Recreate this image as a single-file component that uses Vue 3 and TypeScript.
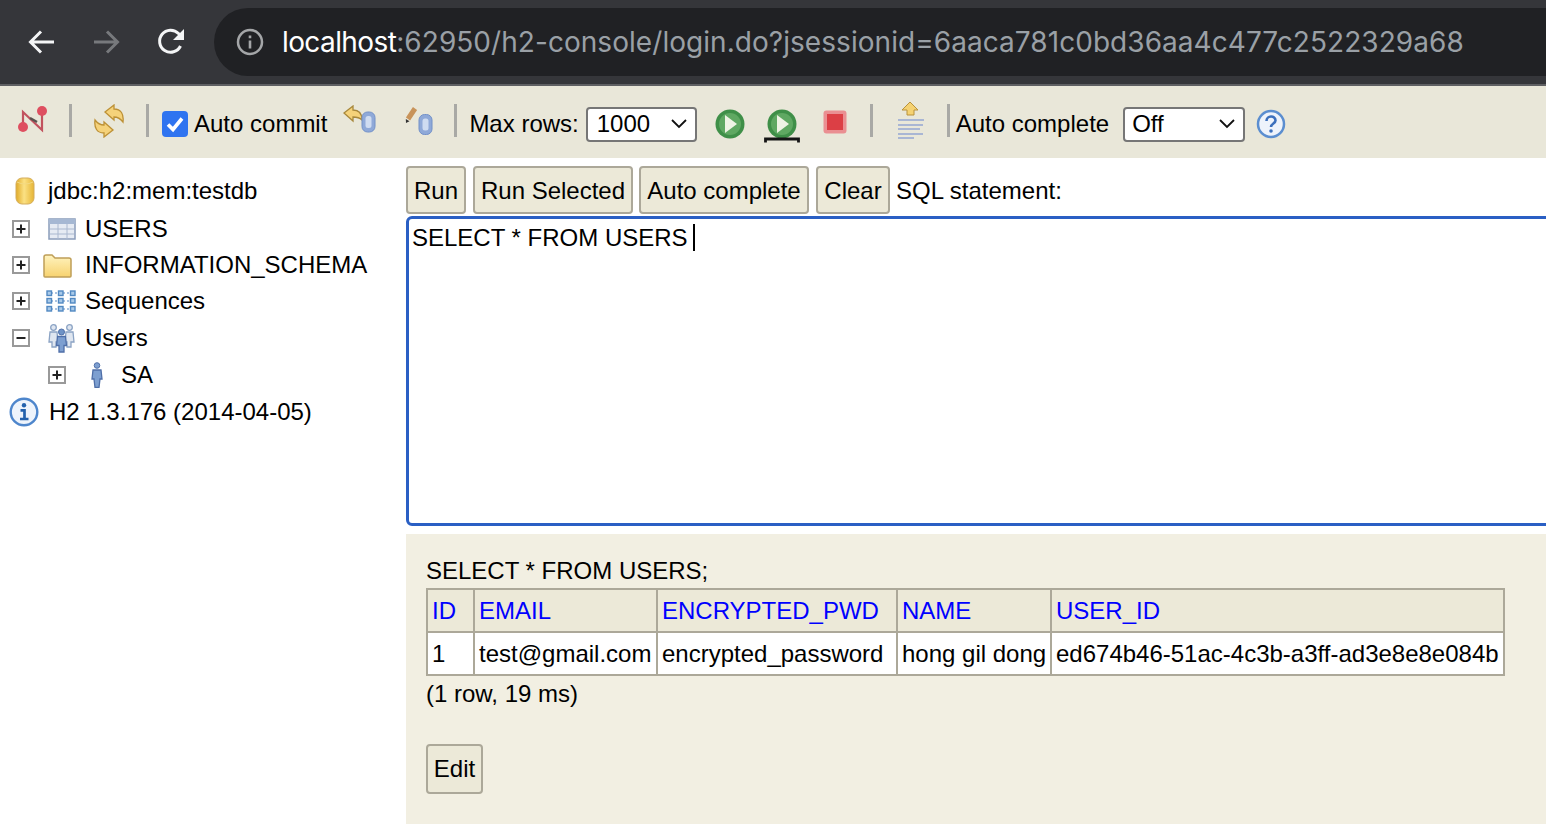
<script setup lang="ts">
const headers: string[] = ['ID', 'EMAIL', 'ENCRYPTED_PWD', 'NAME', 'USER_ID']
const cells: string[] = ['1', 'test@gmail.com', 'encrypted_password', 'hong gil dong', 'ed674b46-51ac-4c3b-a3ff-ad3e8e8e084b']
</script>

<template>
  <div class="page">
    <header class="chrome">
      <svg class="nav first" width="30" height="30" viewBox="0 0 30 30"><path d="M27 15H4M14 4.500 3.500 15 14 25.500" fill="none" stroke="#f4f5f6" stroke-width="3"/></svg>
      <svg class="nav second" width="30" height="30" viewBox="0 0 30 30"><path d="M3 15h23M16 4.500 26.500 15 16 25.500" fill="none" stroke="#77797c" stroke-width="3"/></svg>
      <svg class="nav third" width="30" height="30" viewBox="0 0 30 30"><path d="M24.500 19A11 11 0 1 1 22.500 6.500L26 10" fill="none" stroke="#f4f5f6" stroke-width="3"/><path d="M28 2v11H17z" fill="#f4f5f6"/></svg>
      <div class="omnibox">
        <svg width="28" height="28" viewBox="0 0 28 28"><circle cx="14" cy="14" r="12" fill="none" stroke="#a4a6a8" stroke-width="2.500"/><path d="M14 12.500v8M14 7.500v2.800" stroke="#a4a6a8" stroke-width="2.600"/></svg>
        <span class="url"><b>localhost</b>:62950/h2-console/login.do?jsessionid=6aaca781c0bd36aa4c477c2522329a68</span>
      </div>
    </header>

    <nav class="toolbar">
      <svg class="icon t-disc" width="30" height="28" viewBox="0 0 30 28"><path d="M5 22V7l19 18V7" fill="none" stroke="#c2525e" stroke-width="2.200"/><path d="M12 13l7 4" stroke="#5a5450" stroke-width="2.400"/><circle cx="5" cy="22" r="5" fill="#de4f60"/><circle cx="24" cy="6" r="5" fill="#de4f60"/></svg>
      <i class="sep s1"></i>
      <svg class="icon t-refresh" width="30" height="34" viewBox="0 0 30 34"><g fill="#f5d27a" stroke="#bd9136" stroke-width="1.300"><path d="M11 8 20 1v4C27 5 30 10 29 18 26 14 24 13 20 13v3z"/><path d="M11 8 20 1v4C27 5 30 10 29 18 26 14 24 13 20 13v3z" transform="rotate(180 15 17)"/></g></svg>
      <i class="sep s2"></i>
      <span class="check">
        <svg width="26" height="26" viewBox="0 0 26 26"><rect width="26" height="26" rx="4" fill="#2f74f0"/><path d="M6 13.500l5 5 9-11" fill="none" stroke="#fff" stroke-width="3.600"/></svg>
      </span>
      <span class="label auto-commit">Auto commit</span>
      <svg class="icon t-rollback" width="33" height="28" viewBox="0 0 33 28"><path d="M1 8 10 1v4c5 0 9 3 9 10-2-2-5-3-9-3v4z" fill="#f5d27a" stroke="#a8883c" stroke-width="1.300"/><rect x="19" y="7" width="13" height="20" rx="5.500" fill="#8fa9d8" stroke="#7391c8"/><rect x="22.500" y="11" width="6" height="12" rx="2.500" fill="#cfdcf1"/></svg>
      <svg class="icon t-commit" width="28" height="30" viewBox="0 0 28 30"><path d="M3 14 10 3.500" stroke="#c8935a" stroke-width="5"/><path d="M1 18 .8 14l3.700 2.300z" fill="#333"/><rect x="14" y="9.500" width="13" height="20" rx="5.500" fill="#8fa9d8" stroke="#7391c8"/><rect x="17.500" y="13.500" width="6" height="12" rx="2.500" fill="#cfdcf1"/></svg>
      <i class="sep s3"></i>
      <span class="label max-rows">Max rows:</span>
      <div class="select rows"><span>1000</span><svg width="16" height="10" viewBox="0 0 16 10"><path d="M1 1l7 7 7-7" fill="none" stroke="#111" stroke-width="1.800"/></svg></div>
      <svg class="icon t-play" width="30" height="30" viewBox="0 0 30 30"><circle cx="15" cy="15" r="14.500" fill="#3f8f48"/><circle cx="15" cy="15" r="11" fill="#5fa862"/><path d="M10 6l12 9-12 9z" fill="#eef3e4"/></svg>
      <svg class="icon t-play-sel" width="36" height="34" viewBox="0 0 36 34"><circle cx="18" cy="15" r="14.500" fill="#3f8f48"/><circle cx="18" cy="15" r="11" fill="#5fa862"/><path d="M13 6l12 9-12 9z" fill="#eef3e4"/><path d="M1.500 33.500v-3.500h33v3.500" fill="none" stroke="#151515" stroke-width="2.800"/></svg>
      <svg class="icon t-stop" width="24" height="24" viewBox="0 0 24 24"><rect x=".5" y=".5" width="23" height="23" rx="3" fill="#ea8f92"/><rect x="4" y="4" width="16" height="16" fill="#dc3f45"/></svg>
      <i class="sep s4"></i>
      <svg class="icon t-history" width="28" height="38" viewBox="0 0 28 38"><path d="M13 1l8 8h-4v5h-7V9H5z" fill="#f5d272" stroke="#b8923c"/><path d="M1 19h26M1 24h25M1 28h22M1 33h25M1 37h16" stroke="#a9b6d4" stroke-width="2.200"/></svg>
      <i class="sep s5"></i>
      <span class="label auto-complete">Auto complete</span>
      <div class="select off"><span>Off</span><svg width="16" height="10" viewBox="0 0 16 10"><path d="M1 1l7 7 7-7" fill="none" stroke="#111" stroke-width="1.800"/></svg></div>
      <svg class="icon t-help" width="30" height="30" viewBox="0 0 30 30"><circle cx="15" cy="15" r="13" fill="#eef3fb" stroke="#5b8ed0" stroke-width="2.500"/><path d="M10.500 12c0-6 9-6 9-.5 0 3-4.500 3-4.500 6.500" fill="none" stroke="#3c70bd" stroke-width="2.600"/><circle cx="15" cy="22" r="1.800" fill="#3c70bd"/></svg>
    </nav>

    <div class="workspace">
      <aside class="tree">
        <div class="row root">
          <span class="slot-db"><svg class="icon" width="20" height="28" viewBox="0 0 20 28"><defs><linearGradient id="dbg" x1="0" x2="1" y1="0" y2="0"><stop offset="0" stop-color="#e0aa28"/><stop offset=".45" stop-color="#fbe184"/><stop offset="1" stop-color="#e6b535"/></linearGradient></defs><rect x="1" y="1" width="18" height="26" rx="6" fill="url(#dbg)" stroke="#d4ad5c"/><path d="M2 5q8 4 16 0" fill="none" stroke="#f3d982"/></svg></span>
          <span>jdbc:h2:mem:testdb</span>
        </div>
        <div class="row">
          <svg class="box" width="18" height="18" viewBox="0 0 18 18"><rect x="1" y="1" width="16" height="16" fill="#fff" stroke="#999" stroke-width="2"/><path d="M4.500 9h9M9 4.500v9" stroke="#222" stroke-width="2"/></svg>
          <span class="slot"><svg class="icon table" width="28" height="22" viewBox="0 0 28 22"><rect x="1" y="1" width="26" height="20" fill="#e6ebf3" stroke="#8b9dbb" stroke-width="1.500"/><rect x="1" y="1" width="26" height="5" fill="#a6b8d3"/><path d="M2 11h24M2 16h24M10 6v15M19 6v15" stroke="#aab8cf"/></svg></span>
          <span>USERS</span>
        </div>
        <div class="row">
          <svg class="box" width="18" height="18" viewBox="0 0 18 18"><rect x="1" y="1" width="16" height="16" fill="#fff" stroke="#999" stroke-width="2"/><path d="M4.500 9h9M9 4.500v9" stroke="#222" stroke-width="2"/></svg>
          <span class="slot"><svg class="icon folder" width="29" height="25" viewBox="0 0 29 25"><defs><linearGradient id="fld" x1="0" x2="0" y1="0" y2="1"><stop offset="0" stop-color="#fff3bf"/><stop offset="1" stop-color="#f7d26f"/></linearGradient></defs><path d="M1 23V4q0-2 2-2h6l3 3h14q2 0 2 2v16q0 1-1 1H2q-1 0-1-1z" fill="url(#fld)" stroke="#bf9f58" stroke-width="1.500"/></svg></span>
          <span>INFORMATION_SCHEMA</span>
        </div>
        <div class="row">
          <svg class="box" width="18" height="18" viewBox="0 0 18 18"><rect x="1" y="1" width="16" height="16" fill="#fff" stroke="#999" stroke-width="2"/><path d="M4.500 9h9M9 4.500v9" stroke="#222" stroke-width="2"/></svg>
          <span class="slot"><svg class="icon seq" width="30" height="22" viewBox="0 0 30 22"><path d="M5 3h20M5 11h20M5 19h20" stroke="#8eb0d8" stroke-width="1.500" stroke-dasharray="2 2"/><g fill="#a9cae9" stroke="#5289c2" stroke-width="1.400"><rect x="1" y="1" width="4.500" height="4.500"/><rect x="12.500" y="1" width="4.500" height="4.500"/><rect x="24.500" y="1" width="4.500" height="4.500"/><rect x="1" y="8.500" width="4.500" height="4.500"/><rect x="12.500" y="8.500" width="4.500" height="4.500"/><rect x="24.500" y="8.500" width="4.500" height="4.500"/><rect x="1" y="16.500" width="4.500" height="4.500"/><rect x="12.500" y="16.500" width="4.500" height="4.500"/><rect x="24.500" y="16.500" width="4.500" height="4.500"/></g></svg></span>
          <span>Sequences</span>
        </div>
        <div class="row">
          <svg class="box" width="18" height="18" viewBox="0 0 18 18"><rect x="1" y="1" width="16" height="16" fill="#fff" stroke="#999" stroke-width="2"/><path d="M4.500 9h9" stroke="#222" stroke-width="2"/></svg>
          <span class="slot"><svg class="icon users" width="27" height="29" viewBox="0 0 27 29"><g fill="#dfe6f0" stroke="#8ba3c4" stroke-width="1.300"><circle cx="5.500" cy="3.500" r="2.800"/><circle cx="21.500" cy="3.500" r="2.800"/><path d="M2 8h7l1 10H8v5H4v-5H1zM25 8h-7l-1 10h2v5h4v-5h3z"/></g><circle cx="13.500" cy="8" r="3" fill="#6f93c6" stroke="#4f6fa8"/><path d="M9.500 12.500h8l1 9h-2.500V28h-5v-6.500H8.500z" fill="#7d9fd0" stroke="#4f6fa8" stroke-width="1.300"/></svg></span>
          <span>Users</span>
        </div>
        <div class="row child">
          <svg class="box" width="18" height="18" viewBox="0 0 18 18"><rect x="1" y="1" width="16" height="16" fill="#fff" stroke="#999" stroke-width="2"/><path d="M4.500 9h9M9 4.500v9" stroke="#222" stroke-width="2"/></svg>
          <span class="slot"><svg class="icon person" width="12" height="26" viewBox="0 0 12 26"><circle cx="6" cy="3.500" r="2.800" fill="#7d9fd0" stroke="#4f6fa8"/><path d="M2 8h8l1 9H9l-1 8.500H4L3 17H1z" fill="#7d9fd0" stroke="#4f6fa8" stroke-width="1.300"/></svg></span>
          <span>SA</span>
        </div>
        <div class="row version">
          <svg class="icon ic-info" width="30" height="30" viewBox="0 0 30 30"><circle cx="15" cy="15" r="13.300" fill="#eef4fc" stroke="#4e86cc" stroke-width="2.400"/><path d="M11.500 13.300h4v8M11 22h8.500" fill="none" stroke="#2462ad" stroke-width="2.700"/><circle cx="15" cy="8.300" r="2.200" fill="#2462ad"/></svg>
          <span>H2 1.3.176 (2014-04-05)</span>
        </div>
      </aside>

      <main class="main">
        <div class="actions">
          <button class="btn run">Run</button>
          <button class="btn sel">Run Selected</button>
          <button class="btn auto">Auto complete</button>
          <button class="btn clear">Clear</button>
          <span class="sql-label">SQL statement:</span>
        </div>
        <div class="editor"><span>SELECT * FROM USERS</span><i class="caret"></i></div>
        <section class="result">
          <p class="query">SELECT * FROM USERS;</p>
          <table>
            <colgroup><col class="c1"><col class="c2"><col class="c3"><col class="c4"><col class="c5"></colgroup>
            <thead><tr><th v-for="h in headers" :key="h">{{ h }}</th></tr></thead>
            <tbody><tr><td v-for="c in cells" :key="c">{{ c }}</td></tr></tbody>
          </table>
          <p class="status">(1 row, 19 ms)</p>
          <button class="btn edit">Edit</button>
        </section>
      </main>
    </div>
  </div>
</template>

<style>
html, body { margin: 0; overflow: hidden; background: #fff; }
</style>

<style scoped>
.page { width: 1546px; height: 824px; overflow: hidden; font-family: "Liberation Sans", Arial, sans-serif; font-size: 24px; color: #000; }
.icon { filter: blur(.4px); }
.chrome { height: 84px; box-sizing: border-box; background: #35363a; display: flex; align-items: center; padding-left: 27px; }
.chrome svg.nav { flex: none; }
.nav.second { margin-left: 34px; }
.nav.third { margin-left: 35px; }
.omnibox { margin-left: 28px; flex: 1; min-width: 0; height: 68px; background: #202124; border-radius: 34px 0 0 34px; display: flex; align-items: center; padding-left: 22px; }
.url { margin-left: 18px; font-family: Inter, "Liberation Sans", sans-serif; font-size: 28px; letter-spacing: .05px; color: #9aa0a6; white-space: nowrap; }
.url b { font-weight: 400; color: #fff; letter-spacing: -.6px; }
.toolbar { height: 74px; box-sizing: border-box; border-top: 2px solid #5f6063; background: #e9e7d9; display: flex; align-items: center; padding: 4px 0 0 18px; white-space: nowrap; }
.toolbar > * { flex: none; }
.sep { width: 3px; height: 33px; background: #a9a9a5; display: block; margin-top: -7px; }
.t-disc { margin-top: -10px; }
.s1 { margin-left: 21px; }
.t-refresh { margin-left: 22px; margin-top: -6px; }
.s2 { margin-left: 22px; }
.check { margin-left: 13px; height: 26px; }
.check svg { display: block; }
.auto-commit { margin-left: 6px; }
.t-rollback { margin-left: 16px; margin-top: -10px; }
.t-commit { margin-left: 29px; margin-top: -9px; }
.s3 { margin-left: 21px; }
.max-rows { margin-left: 12px; }
.select { box-sizing: border-box; height: 35px; background: #fff; border: 2px solid #767676; border-radius: 4px; display: flex; align-items: center; justify-content: space-between; padding: 0 8px; }
.rows { width: 111px; margin-left: 7px; padding-left: 9px; }
.off { width: 122px; margin-left: 14px; padding-left: 7px; }
.t-play { margin-left: 18px; }
.t-play-sel { margin-left: 19px; margin-top: 3px; }
.t-stop { margin-left: 23px; margin-top: -5px; }
.s4 { margin-left: 23px; }
.t-history { margin-left: 24px; margin-top: -8px; }
.s5 { margin-left: 22px; }
.auto-complete { margin-left: 6px; }
.t-help { margin-left: 11px; }
.workspace { display: flex; height: 666px; }
.tree { width: 406px; flex: none; box-sizing: border-box; padding-top: 15px; }
.row { height: 36px; display: flex; align-items: center; padding-left: 12px; white-space: nowrap; margin-top: 1px; }
.row:nth-child(1) { margin-top: 0; }
.row:nth-child(2) { margin-top: 2px; }
.row:nth-child(3), .row:nth-child(4) { margin-top: 0; }
.row svg { flex: none; display: block; }
.slot { width: 55px; flex: none; display: flex; justify-content: flex-start; }
.table { margin-left: 18px; }
.folder { margin-left: 13px; }
.seq { margin-left: 16px; }
.users { margin-left: 18px; }
.person { margin-left: 25px; }
.row.root { padding-left: 15px; }
.slot-db { width: 33px; flex: none; }
.child { padding-left: 48px; }
.version { padding-left: 9px; }
.ic-info { margin-right: 10px; }
.main { flex: 1; min-width: 0; }
.actions { display: flex; align-items: flex-start; height: 58px; box-sizing: border-box; padding-top: 8px; white-space: nowrap; }
.btn { font: inherit; color: #000; background: #ece9d8; border: 2px solid #aca899; border-radius: 4px; height: 48px; padding: 2px 0 0; box-sizing: border-box; }
.run { width: 60px; }
.sel { width: 160px; margin-left: 7px; }
.auto { width: 170px; margin-left: 6px; }
.clear { width: 74px; margin-left: 7px; }
.sql-label { margin-left: 6px; align-self: center; }
.editor { box-sizing: border-box; width: 1160px; height: 310px; border: 3px solid #2a5fc4; border-radius: 6px; padding: 2px 3px; display: flex; align-items: flex-start; line-height: 34px; }
.caret { width: 2px; height: 27px; background: #000; margin: 3px 0 0 5px; display: block; }
.result { margin-top: 8px; height: 290px; box-sizing: border-box; background: #f2efe2; padding: 19px 20px 0; }
.query { margin: 0; line-height: 35px; }
table { border-collapse: collapse; table-layout: fixed; width: 1077px; }
.c1 { width: 47px; }
.c2 { width: 183px; }
.c3 { width: 240px; }
.c4 { width: 154px; }
.c5 { width: 453px; }
th, td { border: 2px solid #aca899; height: 43px; padding: 0 4px; text-align: left; font-weight: 400; white-space: nowrap; box-sizing: border-box; overflow: hidden; }
th { background: #ece9d8; color: #0000ff; }
td { background: #fff; }
.status { margin: 0; line-height: 36px; }
.edit { display: block; width: 57px; height: 50px; margin-top: 32px; padding: 0; }
</style>
